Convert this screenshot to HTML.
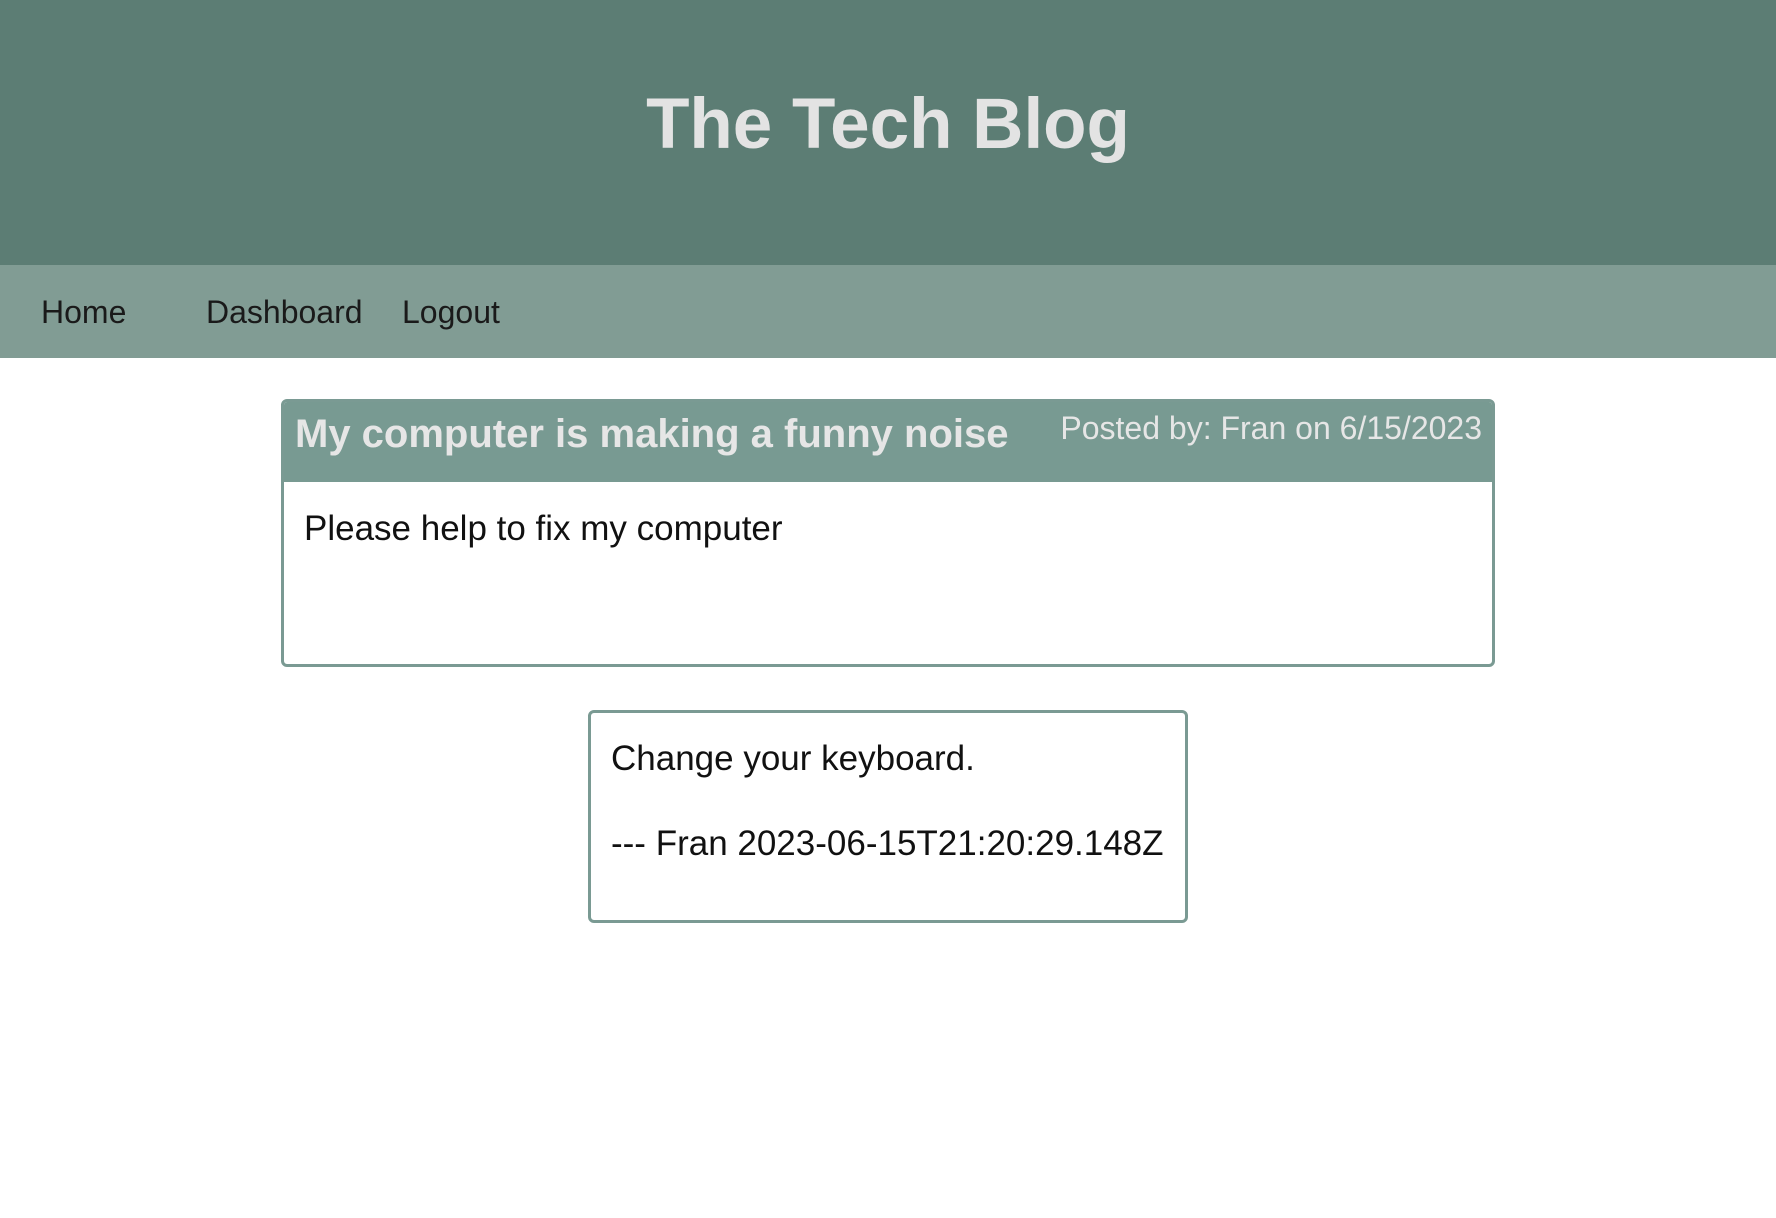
<!DOCTYPE html>
<html><head><meta charset="utf-8"><style>
*{margin:0;padding:0;box-sizing:border-box}
body{width:1776px;height:1218px;background:#fff;font-family:"Liberation Sans",Arial,sans-serif;position:relative;overflow:hidden;color:#111}
.hdr{position:absolute;left:0;top:0;width:1776px;height:265px;background:#5c7d74}
.hdr h1{position:absolute;left:0;width:1776px;top:81px;text-align:center;font-size:71px;line-height:88px;color:#e3e3e3;font-weight:bold}
.nav{position:absolute;left:0;top:265px;width:1776px;height:93px;background:#819c94}
.nav span{position:absolute;top:27px;font-size:32px;line-height:40px;color:#1a1a1a}
.card{position:absolute;left:281px;top:399px;width:1214px;height:268px;border:3px solid #7a9a93;border-radius:6px;overflow:hidden}
.ch{position:absolute;left:0;top:0;width:100%;height:80px;background:#789a92}
.ct{position:absolute;left:11px;top:9px;font-size:40px;font-weight:bold;color:#e6e6e6;line-height:46px;white-space:nowrap}
.cp{position:absolute;right:10px;top:8px;font-size:32px;color:#e6e6e6;line-height:36px;white-space:nowrap}
.cb{position:absolute;left:20px;top:107px;font-size:35px;line-height:40px}
.cm{position:absolute;left:588px;top:710px;width:600px;height:213px;border:3px solid #7a9a93;border-radius:6px}
.cm p{position:absolute;left:20px;font-size:35px;line-height:40px;white-space:nowrap}
</style></head><body>
<div class="hdr"><h1>The Tech Blog</h1></div>
<div class="nav"><span style="left:41px">Home</span><span style="left:206px">Dashboard</span><span style="left:402px">Logout</span></div>
<div class="card"><div class="ch"><div class="ct">My computer is making a funny noise</div><div class="cp">Posted by: Fran on 6/15/2023</div></div>
<div class="cb">Please help to fix my computer</div></div>
<div class="cm"><p style="top:26px">Change your keyboard.</p><p style="top:111px">--- Fran 2023-06-15T21:20:29.148Z</p></div>
</body></html>
